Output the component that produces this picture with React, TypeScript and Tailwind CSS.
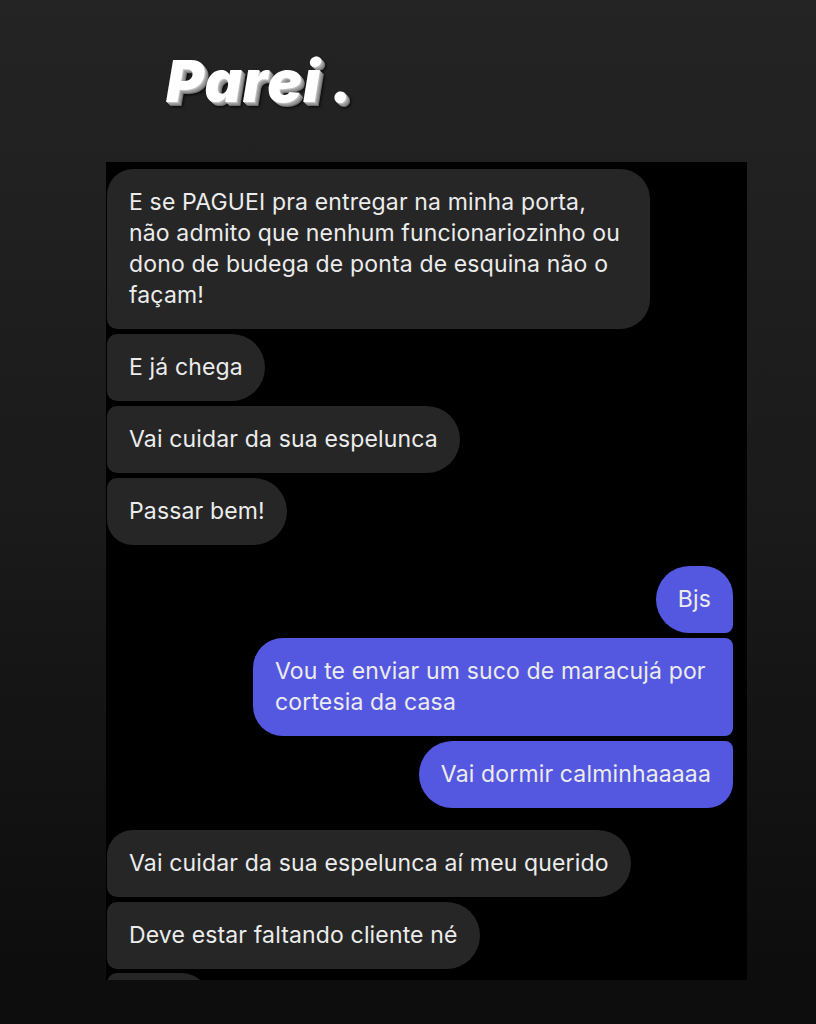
import React from 'react';

type Msg = { text: React.ReactNode; me?: boolean; cls: string; gap?: string };

const msgs: Msg[] = [
    {
        text: (
            <>
                E se PAGUEI pra entregar na minha porta,
                <br />
                não admito que nenhum funcionariozinho ou
                <br />
                dono de budega de ponta de esquina não o
                <br />
                façam!
            </>
        ),
        cls: 'w-[543px] rounded-tl-[26px] rounded-tr-[30px] rounded-br-[30px] rounded-bl-[10px]',
        gap: 'mt-[7px]',
    },
    { text: 'E já chega', cls: 'rounded-l-[10px] rounded-r-[34px]', gap: 'mt-[5px]' },
    { text: 'Vai cuidar da sua espelunca', cls: 'rounded-l-[10px] rounded-r-[34px]', gap: 'mt-[5px]' },
    { text: 'Passar bem!', cls: 'rounded-tl-[10px] rounded-bl-[26px] rounded-r-[34px]', gap: 'mt-[5px]' },
    { text: 'Bjs', me: true, cls: 'rounded-l-[34px] rounded-tr-[30px] rounded-br-[8px]', gap: 'mt-[21px]' },
    {
        text: (
            <>
                Vou te enviar um suco de maracujá por
                <br />
                cortesia da casa
            </>
        ),
        me: true,
        cls: 'w-[480px] rounded-l-[30px] rounded-r-[8px]',
        gap: 'mt-[5px]',
    },
    { text: 'Vai dormir calminhaaaaa', me: true, cls: 'rounded-l-[34px] rounded-tr-[8px] rounded-br-[26px]', gap: 'mt-[5px]' },
    { text: 'Vai cuidar da sua espelunca aí meu querido', cls: 'rounded-tl-[26px] rounded-bl-[10px] rounded-r-[34px]', gap: 'mt-[22px]' },
    { text: 'Deve estar faltando cliente né', cls: 'rounded-l-[10px] rounded-r-[34px]', gap: 'mt-[5px]' },
];

const Bubble = ({ m }: { m: Msg }) => (
    <div className={`flex ${m.me ? 'justify-end pr-[14px]' : 'justify-start pl-px'} ${m.gap}`}>
        <div
            className={`px-[22px] py-[18px] text-[23px] leading-[31px] tracking-[0.15px] whitespace-nowrap text-[#ececec] ${
                m.me ? 'bg-[#5458e0]' : 'bg-[#262626]'
            } ${m.cls}`}
        >
            {m.text}
        </div>
    </div>
);

export default function App() {
    return (
        <div
            className="w-[816px] h-[1024px] overflow-hidden bg-gradient-to-b from-[#242424] via-[#1a1a1a] to-[#0c0c0c]"
            style={{ fontFamily: 'Inter, "Noto Sans", sans-serif' }}
        >
            <div className="h-[162px] pl-[166px] pt-[47px]">
                <span
                    className="text-[58px] leading-[68px] font-black italic text-white tracking-[1px]"
                    style={{
                        textShadow:
                            '1px 1px 0 #c0c0c0, 2px 2px 0 #a0a0a0, 3px 3px 0 #909090, 4px 4px 0 #707070, 5px 5px 3px rgba(0,0,0,0.8)',
                    }}
                >
                    Parei<span className="ml-[10px]">.</span>
                </span>
            </div>
            <div className="ml-[106px] w-[641px] h-[818px] bg-black overflow-hidden">
                {msgs.map((m, i) => (
                    <Bubble key={i} m={m} />
                ))}
                <div className="mt-[4px] pl-px">
                    <div className="w-[104px] h-[40px] bg-[#262626] rounded-tl-[10px] rounded-tr-[30px]" />
                </div>
            </div>
        </div>
    );
}
